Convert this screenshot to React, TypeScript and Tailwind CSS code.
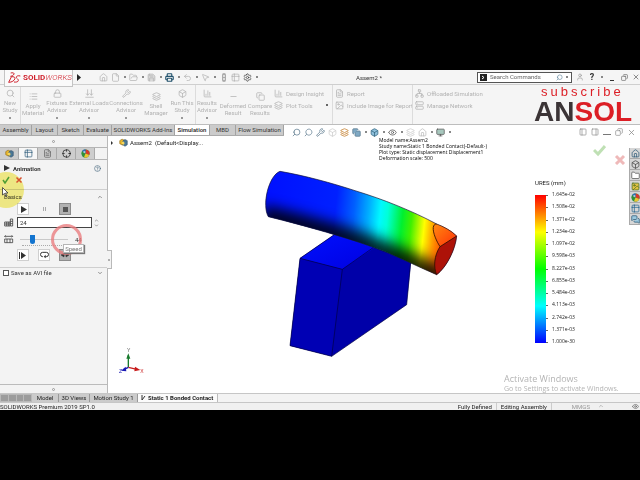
import React, { useState } from "react";
import {
  BarChart3,
  Box,
  ChevronDown,
  ChevronUp,
  CircleHelp,
  Copy,
  Crosshair,
  Eye,
  File,
  FileText,
  Folder,
  FolderOpen,
  House,
  Image,
  Layers,
  List,
  Lock,
  MessagesSquare,
  Minus,
  Monitor,
  MousePointer2,
  Network,
  PanelLeft,
  PanelRight,
  Printer,
  Save,
  Search,
  Server,
  Settings,
  Table2,
  Undo2,
  User,
  Wrench,
  X,
  type LucideIcon,
} from "lucide-react";
import clsx from "clsx";

interface RibbonItem {
  lines: string[];
  icon: LucideIcon;
  width: string;
  menu?: boolean;
  low?: boolean;
}

const adviserItems: RibbonItem[] = [
  { lines: ["New", "Study"], icon: Search, width: "w-5", menu: true },
  { lines: ["Apply", "Material"], icon: List, width: "w-6", low: true },
  { lines: ["Fixtures", "Advisor"], icon: Lock, width: "w-6", menu: true },
  { lines: ["External Loads", "Advisor"], icon: LoadsIcon as LucideIcon, width: "w-10", menu: true },
  { lines: ["Connections", "Advisor"], icon: Wrench, width: "w-[34px]", menu: true },
  { lines: ["Shell", "Manager"], icon: Layers, width: "w-[26px]", low: true },
  { lines: ["Run This", "Study"], icon: Box, width: "w-[26px]", menu: true },
];

const resultItems: RibbonItem[] = [
  { lines: ["Results", "Advisor"], icon: BarChart3, width: "w-[22px]", menu: true },
  { lines: ["Deformed", "Result"], icon: Minus, width: "w-[30px]", low: true },
  { lines: ["Compare", "Results"], icon: Copy, width: "w-6", low: true },
];

const commandTabs = [
  { label: "Assembly", width: "w-8" },
  { label: "Layout", width: "w-[26px]" },
  { label: "Sketch", width: "w-[26px]" },
  { label: "Evaluate", width: "w-7" },
  { label: "SOLIDWORKS Add-Ins", width: "w-[63px]" },
  { label: "Simulation", width: "w-[35px]" },
  { label: "MBD", width: "w-[26px]" },
  { label: "Flow Simulation", width: "w-12" },
];

const legend = [
  "1.645e-02",
  "1.508e-02",
  "1.371e-02",
  "1.234e-02",
  "1.097e-02",
  "9.598e-03",
  "8.227e-03",
  "6.855e-03",
  "5.484e-03",
  "4.113e-03",
  "2.742e-03",
  "1.371e-03",
  "1.000e-30",
];

function LoadsIcon(props: React.SVGProps<SVGSVGElement> & { size?: number }) {
  const { size = 9, ...rest } = props;
  return (
    <svg width={size} height={size} viewBox="0 0 24 24" fill="none" stroke="currentColor" strokeWidth="2" {...rest}>
      <path d="M7 1v15M3 12l4 5 4-5M17 1v15M13 12l4 5 4-5M1 22h22" />
    </svg>
  );
}

function Dot({ className }: { className?: string }) {
  return (
    <span className={clsx("flex shrink-0 justify-center", className ?? "w-[9px]")}>
      <span className="h-0.5 w-0.5 bg-[#888]" />
    </span>
  );
}

function AssemblyIcon({ size = 9 }: { size?: number }) {
  return (
    <svg width={size} height={size} viewBox="0 0 24 24" className="shrink-0">
      <path d="M2 7l6-4 7 3v9l-6 4-7-4z" fill="#e7b52c" stroke="#8a6411" strokeWidth="1.5" />
      <path d="M10 8l6-4 6 3v11l-6 4-6-4z" fill="#4c7896" stroke="#274a63" strokeWidth="1.5" />
      <path d="M7 10l5-1 3 4-2 5-5-2z" fill="#f5d65c" />
    </svg>
  );
}

function ColorWheel({ size = 9 }: { size?: number }) {
  return (
    <svg width={size} height={size} viewBox="0 0 24 24" className="shrink-0">
      <circle cx="12" cy="12" r="11" fill="#2f8f3c" />
      <path d="M12 12V1a11 11 0 0 1 10 15z" fill="#d8382c" />
      <path d="M12 12L3 5a11 11 0 0 1 9-4z" fill="#2f6fc0" />
      <path d="M12 12l10 4a11 11 0 0 1-14 6z" fill="#edc531" />
      <circle cx="9" cy="8" r="3" fill="#fff" opacity=".6" />
    </svg>
  );
}

function RibbonButton({ item }: { item: RibbonItem }) {
  const Icon = item.icon;
  return (
    <button
      className={clsx(
        "flex h-full shrink-0 flex-col items-center text-center whitespace-nowrap",
        item.width,
        item.low ? "pt-[7px]" : "pt-1"
      )}
    >
      <Icon size={9} className="shrink-0" />
      <span className="mt-px leading-[7px]">
        {item.lines[0]}
        <br />
        {item.lines[1]}
      </span>
      {item.menu && <span className="mt-1 h-0.5 w-0.5 bg-[#999]" />}
    </button>
  );
}

function RibbonRow({ icon: Icon, label, menu }: { icon: LucideIcon; label: string; menu?: boolean }) {
  return (
    <button className="flex h-3 items-center gap-[3px] whitespace-nowrap">
      <Icon size={9} className="shrink-0" />
      {label}
      {menu && <span className="mr-1 ml-auto h-0.5 w-0.5 bg-[#666]" />}
    </button>
  );
}

function TitleBar() {
  return (
    <header className="flex h-[15px] shrink-0 items-center border-b border-[#cfcfcf] bg-[#f5f5f5]">
      <div className="z-10 ml-1 flex h-[17px] w-[69px] shrink-0 items-center gap-0.5 self-start border border-t-0 border-[#c4c4c4] bg-[#fafafa] pl-[3px] text-[8px] text-[#cf1f2b]">
        <svg width="13" height="12" viewBox="0 0 39 36" fill="none" stroke="#cf1f2b" strokeWidth="3">
          <path d="M8 3c9-2 13 1 8 6-3 3-6 3-9 4M11 13L2 31c9 0 18-5 19-12 0-4-4-5-10-5" />
          <path d="M37 12c-7-2-12 0-12 4s7 5 6 10c-1 4-7 5-13 4" />
        </svg>
        <span className="leading-none">
          <b>SOLID</b>
          <i className="font-light">WORKS</i>
        </span>
      </div>
      <svg width="6" height="7" viewBox="0 0 6 7" className="mr-4 ml-1 shrink-0">
        <path d="M0 0l4 3.500-4 3.500z" fill="#222" />
      </svg>
      <nav className="flex shrink-0 items-center text-[#b4b4b4]">
        <House size={9} className="mr-[3px]" />
        <File size={9} />
        <Dot />
        <FolderOpen size={9} />
        <Dot />
        <Save size={9} fill="#d8d8d8" />
        <Dot />
        <Printer size={9} className="text-[#23536e]" strokeWidth={3} />
        <Dot />
        <Undo2 size={9} />
        <Dot />
        <MousePointer2 size={9} />
        <Dot />
        <svg width="9" height="9" viewBox="0 0 9 9" className="mr-[3px]">
          <rect x="3" y="0" width="4" height="9" rx="2" fill="#aaa" />
          <circle cx="5" cy="3" r="1" fill="#eee" />
          <circle cx="5" cy="6" r="1" fill="#eee" />
        </svg>
        <Table2 size={9} className="mr-[3px]" />
        <Settings size={9} className="text-[#444]" />
        <Dot />
      </nav>
      <h1 className="min-w-0 flex-1 truncate text-center text-[6px] text-[#333]">Assem2 *</h1>
      <label className="flex h-[11px] w-[95px] shrink-0 items-center border border-[#555] bg-white pl-0.5 text-[#5a7f9a]">
        <svg width="7" height="7" viewBox="0 0 7 7" className="mr-[3px] shrink-0">
          <path d="M0 0h7v7H0z" fill="#222" />
          <path d="M2 2l2 1.500L2 5" stroke="#fff" fill="none" />
        </svg>
        <input
          aria-label="Search Commands"
          placeholder="Search Commands"
          className="min-w-0 flex-1 text-[6px] leading-[8px] outline-none placeholder:text-[#666]"
        />
        <Search size={7} className="-scale-x-100" />
        <Dot className="w-2" />
      </label>
      <div className="flex shrink-0 items-center text-[#555]">
        <User size={8} className="ml-1 text-[#999]" />
        <button className="w-4 text-center text-[9px] leading-none font-bold text-[#333]">?</button>
        <Dot className="w-1" />
        <button aria-label="Minimize" className="flex w-4 justify-center pt-1.5">
          <span className="h-px w-1 bg-[#333]" />
        </button>
        <button aria-label="Restore" className="flex w-2 justify-center">
          <Copy size={7} className="-scale-x-100" />
        </button>
        <button aria-label="Close" className="ml-1 flex w-2 justify-center">
          <X size={8} />
        </button>
      </div>
    </header>
  );
}

function Ribbon() {
  return (
    <section className="flex h-10 shrink-0 border-b border-[#bdbdbd] bg-[#f5f5f5] text-[6px] text-[#b2b2b2]">
      <RibbonButton item={adviserItems[0]} />
      <div className="w-px shrink-0 bg-[#dcdcdc]" />
      {adviserItems.slice(1).map((item) => (
        <RibbonButton key={item.lines[0]} item={item} />
      ))}
      <div className="w-px shrink-0 bg-[#dcdcdc]" />
      {resultItems.map((item) => (
        <RibbonButton key={item.lines[0]} item={item} />
      ))}
      <div className="flex w-[60px] shrink-0 flex-col pt-0.5 pl-0.5">
        <RibbonRow icon={BarChart3} label="Design Insight" />
        <RibbonRow icon={Layers} label="Plot Tools" menu />
      </div>
      <div className="flex w-20 shrink-0 flex-col border-l border-[#dcdcdc] pt-0.5 pl-0.5">
        <RibbonRow icon={FileText} label="Report" />
        <RibbonRow icon={Image} label="Include Image for Report" />
      </div>
      <div className="flex w-[70px] shrink-0 flex-col border-l border-[#dcdcdc] pt-0.5 pl-0.5">
        <RibbonRow icon={Network} label="Offloaded Simulation" />
        <RibbonRow icon={Server} label="Manage Network" />
      </div>
      <div className="mr-2 ml-auto flex w-[98px] flex-col font-['Liberation_Sans',sans-serif] text-[#dc1e25]">
        <span className="pl-[7px] text-[13px] leading-[14px] tracking-[3px]">subscribe</span>
        <strong className="text-[28px] leading-[26px]">
          <span className="text-[#3b3436]">AN</span>SOL
        </strong>
      </div>
    </section>
  );
}

function CommandTabs() {
  return (
    <div className="z-10 flex h-[11px] shrink-0 bg-white text-[6px] text-[#333]">
      <div className="flex shrink-0 border-b border-[#aaa]">
        {commandTabs.map(({ label, width }) => (
          <button
            key={label}
            className={clsx(
              "border-r border-[#a2a2a2] text-center leading-[10px] whitespace-nowrap",
              width,
              label === "Simulation" ? "bg-white font-semibold" : "bg-[#cbcbcb]"
            )}
          >
            {label}
          </button>
        ))}
      </div>
      <div className="ml-2 flex h-3 shrink-0 items-center self-start pt-0.5 text-[#5d7b8f]">
        <div className="flex gap-[3px]">
          <Search size={9} className="-scale-x-100" />
          <Search size={9} className="-scale-x-100" strokeDasharray="4 2" />
          <Wrench size={9} />
          <Box size={9} className="text-[#ccc]" />
          <Layers size={9} className="text-[#c27a24]" />
          <Copy size={9} fill="#7fa9c4" />
        </div>
        <Dot />
        <Box size={9} fill="#8fc0dc" className="text-[#33657f]" />
        <Dot />
        <Eye size={9} className="text-[#555]" />
        <Dot />
        <Layers size={9} className="mr-[3px] text-[#ccc]" />
        <House size={9} className="text-[#bbb]" />
        <Dot />
        <Monitor size={9} fill="#a7c7bd" className="text-[#555]" />
        <Dot />
      </div>
      <div className="mr-1 ml-auto flex h-3 shrink-0 items-center gap-1 self-start pt-0.5 text-[#888]">
        <PanelLeft size={8} />
        <PanelRight size={8} />
        <span className="mt-1 h-px w-2 bg-[#777]" />
        <Copy size={8} className="-scale-x-100" />
        <X size={9} />
      </div>
    </div>
  );
}

function SquareButton({ label, active, children }: { label: string; active?: boolean; children: React.ReactNode }) {
  return (
    <button
      aria-label={label}
      className={clsx(
        "flex size-3 items-center justify-center border",
        active ? "border-[#8b8b8b] bg-[#b1b1b1]" : "border-[#cfcfcf] bg-white"
      )}
    >
      {children}
    </button>
  );
}

function FrameIcon() {
  return (
    <svg width="10" height="9" viewBox="0 0 30 27" className="shrink-0" fill="none" stroke="#444" strokeWidth="2.500">
      <path d="M2 12h16v12H2zM2 18h16M8 12v12M13 12v12M19 3h7v21h-7zM19 10h7M19 17h7" />
    </svg>
  );
}

function SpeedIcon() {
  return (
    <svg width="10" height="9" viewBox="0 0 30 27" className="shrink-0" fill="none" stroke="#444" strokeWidth="2.500">
      <path d="M2 4h24M5 1L2 4l3 3M23 1l3 3-3 3M2 12h24v11H2zM9 12v11M18 12v11" />
    </svg>
  );
}

function PropertyPanel() {
  const [frames, setFrames] = useState("24");
  const [speed, setSpeed] = useState(24);
  const [saveAvi, setSaveAvi] = useState(false);

  return (
    <aside className="relative flex w-[108px] shrink-0 flex-col border-r border-[#b9b9b9] bg-[#f3f3f3] text-[6px] text-[#333]">
      <div className="flex h-[11px] items-center justify-center">
        <span className="size-[3px] rounded-full border border-[#999]" />
      </div>
      <div className="flex h-[13px] border-y border-[#b5b5b5]">
        {[
          <AssemblyIcon key="Feature tree" />,
          <Table2 key="Properties" size={9} className="text-[#3b6581]" />,
          <FileText key="Configurations" size={9} className="text-[#666]" />,
          <Crosshair key="Dimensions" size={9} className="text-[#222]" />,
          <ColorWheel key="Display" />,
        ].map((icon, i) => (
          <button
            key={icon.key}
            aria-label={String(icon.key)}
            className={clsx(
              "flex w-[19px] items-center justify-center border-r border-[#aaa]",
              i === 1 ? "bg-[#f7f7f7]" : "bg-[#cdcdcd]"
            )}
          >
            {icon}
          </button>
        ))}
      </div>
      <div className="flex h-4 items-center pr-1.5 pl-1 font-bold">
        <svg width="6" height="6" viewBox="0 0 6 6" className="mr-[3px]">
          <path d="M0 0l6 3-6 3z" fill="#333" />
        </svg>
        Animation
        <CircleHelp size={7} className="ml-auto text-[#3d5e77]" />
      </div>
      <div className="relative flex h-[14px] items-start gap-[5px] border-b border-[#cfcfcf] pl-0.5">
        <span className="pointer-events-none absolute -top-1 left-0 h-9 w-6 overflow-hidden mix-blend-multiply">
          <span className="absolute right-0 size-9 rounded-full bg-[#f9f28a]" />
        </span>
        <button aria-label="OK" className="relative">
          <svg width="8" height="8" viewBox="0 0 8 8">
            <path d="M1 4l2 3 4-6" stroke="#4f9d34" strokeWidth="1.500" fill="none" />
          </svg>
        </button>
        <button aria-label="Cancel" className="relative">
          <svg width="8" height="8" viewBox="0 0 8 8">
            <path d="M1.500 1.500l5 5M6.500 1.500l-5 5" stroke="#d8502f" strokeWidth="1.500" fill="none" />
          </svg>
        </button>
        <svg width="7" height="10" viewBox="0 0 7 10" className="absolute bottom-0 left-0.5 translate-y-2">
          <path d="M.5.5v7.500l2-1.500 1.500 3 1-.5-1.500-3H6z" fill="#fff" stroke="#333" strokeWidth=".8" />
        </svg>
      </div>
      <div className="flex h-[13px] items-center justify-between pr-1 pl-1">
        Basics
        <ChevronUp size={6} />
      </div>
      <div className="flex gap-[9px] pl-[17px]">
        <SquareButton label="Play">
          <svg width="7" height="7" viewBox="0 0 7 7">
            <path d="M1 0l6 3.500-6 3.500z" fill="#333" />
          </svg>
        </SquareButton>
        <button aria-label="Pause" className="flex size-3 items-center justify-center gap-px">
          <span className="h-1 w-px bg-[#aaa]" />
          <span className="h-1 w-px bg-[#aaa]" />
        </button>
        <SquareButton label="Stop" active>
          <span className="size-[5px] bg-[#555]" />
        </SquareButton>
      </div>
      <div className="mt-0.5 flex items-center pr-2 pl-1">
        <FrameIcon />
        <input
          aria-label="Number of frames"
          value={frames}
          onChange={(e) => setFrames(e.target.value)}
          className="ml-[3px] h-[11px] min-w-0 flex-1 border border-[#444] bg-white pl-0.5 text-[6px]"
        />
        <span className="ml-0.5 flex flex-col">
          <ChevronUp size={5} />
          <ChevronDown size={5} />
        </span>
      </div>
      <div className="relative mt-1 flex h-[15px] items-center pl-1">
        <SpeedIcon />
        <div className="ml-1.5 flex h-[15px] w-12 flex-col justify-center">
          <input
            type="range"
            aria-label="Speed"
            value={speed}
            onChange={(e) => setSpeed(Number(e.target.value))}
            className="h-[11px] w-full appearance-none bg-[linear-gradient(#c9c9c9,#c9c9c9)] bg-[length:100%_1px] bg-center bg-no-repeat [&::-webkit-slider-thumb]:h-[9px] [&::-webkit-slider-thumb]:w-[5px] [&::-webkit-slider-thumb]:appearance-none [&::-webkit-slider-thumb]:rounded-b-full [&::-webkit-slider-thumb]:bg-[#1374cf]"
          />
          <span className="mx-0.5 border-b border-dotted border-[#aaa]" />
        </div>
        <output className="ml-[7px]">44</output>
        <span className="pointer-events-none absolute -top-2 left-[51px] size-[31px] rounded-full border-3 border-[#ea7d80] opacity-80" />
        <span
          role="tooltip"
          className="absolute top-3 left-[63px] z-10 h-[9px] w-[21px] border border-[#b5b5b5] bg-white text-center leading-[7px] text-[#777] shadow-[1px_1px_1px_#777]"
        >
          Speed
        </span>
      </div>
      <div className="mt-0.5 flex gap-[9px] border-b border-[#cfcfcf] pb-1.5 pl-[17px]">
        <SquareButton label="Play once">
          <svg width="8" height="7" viewBox="0 0 8 7">
            <path d="M0 0h1v7H0zM2 0l5 3.500L2 7z" fill="#333" />
          </svg>
        </SquareButton>
        <SquareButton label="Loop">
          <svg width="9" height="8" viewBox="0 0 27 24" fill="none" stroke="#333" strokeWidth="3">
            <path d="M9 17H8A6.500 6.500 0 0 1 8 4h11a6.500 6.500 0 0 1 0 13h-3" />
            <path d="M17 11l-6 6 6 5z" fill="#333" stroke="none" />
          </svg>
        </SquareButton>
        <SquareButton label="Reciprocate" active>
          <svg width="8" height="6" viewBox="0 0 8 6">
            <path d="M0 3l3-2v4zM8 3L5 1v4zM3 3h2" fill="#333" stroke="#333" strokeWidth=".5" />
          </svg>
        </SquareButton>
      </div>
      <div className="flex h-[9px] items-center pr-1 pl-[3px]">
        <label className="flex items-center gap-0.5">
          <input
            type="checkbox"
            checked={saveAvi}
            onChange={(e) => setSaveAvi(e.target.checked)}
            className="size-[6px] appearance-none border border-[#555] bg-white checked:bg-[#1374cf]"
          />
          Save as AVI file
        </label>
        <ChevronDown size={6} className="ml-auto" />
      </div>
      <div className="mt-auto flex h-[9px] items-center justify-center border-t border-[#bbb]">
        <span className="size-[3px] rounded-full border border-[#999]" />
      </div>
      <span className="absolute top-[114px] -right-[5px] z-10 flex h-[19px] w-[5px] items-center justify-center border border-l-0 border-[#b9b9b9] bg-[#f3f3f3]">
        <span className="size-0.5 rounded-full bg-[#999]" />
      </span>
    </aside>
  );
}

function StressModel() {
  const tube =
    "M75 37C150 50 230 72 300 95C385 121 470 155 545 195C565 202 590 216 605 231C602 270 575 325 545 347C485 322 420 287 355 265C290 240 150 200 40 173C20 140 40 50 75 37Z";
  return (
    <svg viewBox="0 0 660 630" className="absolute top-[23px] left-[147px] w-[220px]">
      <defs>
        <linearGradient id="stress" gradientUnits="userSpaceOnUse" x1="30" y1="110" x2="590" y2="170">
          <stop offset="0" stopColor="#0010ff" />
          <stop offset=".38" stopColor="#0020ff" />
          <stop offset=".48" stopColor="#0060ff" />
          <stop offset=".56" stopColor="#00b0ff" />
          <stop offset=".62" stopColor="#00f8ff" />
          <stop offset=".66" stopColor="#00ffd8" />
          <stop offset=".74" stopColor="#00f030" />
          <stop offset=".79" stopColor="#40f000" />
          <stop offset=".86" stopColor="#ffff00" />
          <stop offset=".91" stopColor="#ffa000" />
          <stop offset=".97" stopColor="#ff4000" />
        </linearGradient>
        <linearGradient id="block-top" x1="0" y1="0" x2="1" y2="1">
          <stop offset="0" stopColor="#0010ff" />
          <stop offset="1" stopColor="#0000e0" />
        </linearGradient>
        <linearGradient id="notch" x1="0" y1="0" x2="1" y2="1">
          <stop offset="0" stopColor="#ff8a10" />
          <stop offset="1" stopColor="#ff3008" />
        </linearGradient>
        <clipPath id="tube-clip">
          <path d={tube} />
        </clipPath>
        <filter id="soft" x="-20%" y="-40%" width="140%" height="180%">
          <feGaussianBlur stdDeviation="19" />
        </filter>
      </defs>
      <path d="M135 298L245 222L470 290L455 437L230 592L105 560Z" fill="#0000a8" />
      <path d="M135 298L245 222L370 258L262 331Z" fill="url(#block-top)" />
      <path d="M135 298L262 331L230 592L105 560Z" fill="#0000b4" />
      <path
        d="M245 222L135 298L105 560L230 592L455 437L468 300M135 298L262 331L360 262M262 331L230 592"
        fill="none"
        stroke="#000040"
        strokeWidth="2"
      />
      <path d={tube} fill="url(#stress)" />
      <g clipPath="url(#tube-clip)">
        <path
          d="M20 173C150 203 290 244 355 270C420 292 485 328 565 362"
          fill="none"
          stroke="#000"
          strokeWidth="72"
          opacity=".85"
          filter="url(#soft)"
        />
      </g>
      <path d="M545 195C525 195 537 235 555 263L605 231C590 214 565 202 545 195Z" fill="url(#notch)" />
      <path d="M555 263L605 231C602 270 575 325 545 347C535 325 537 290 555 263Z" fill="#ad1208" />
      <path
        d="M545 195C525 195 537 235 555 263L605 231M555 263C537 290 535 325 545 347"
        fill="none"
        stroke="#301000"
        strokeWidth="2.500"
      />
      <path d={tube} fill="none" stroke="#101030" strokeWidth="2" />
    </svg>
  );
}

function Triad() {
  return (
    <svg width="26" height="28" viewBox="0 0 78 84" className="shrink-0">
      <path d="M28 58V22" stroke="#187a2c" strokeWidth="4" />
      <path d="M22 32l6-16 6 16z" fill="#187a2c" />
      <path d="M28 58l26 6" stroke="#c81c1c" strokeWidth="4" />
      <path d="M48 56l16 10-18 4z" fill="#c81c1c" />
      <path d="M28 58l-14 7" stroke="#1a1ab4" strokeWidth="4" />
      <path d="M20 56l-14 12 16 2z" fill="#1a1ab4" />
      <g fontFamily="Liberation Sans, sans-serif" fontSize="15">
        <text x="24" y="13" fill="#555">Y</text>
        <text x="64" y="75" fill="#c81c1c">X</text>
        <text x="0" y="76" fill="#1a1ab4">Z</text>
      </g>
    </svg>
  );
}

function Viewport() {
  return (
    <main className="relative flex min-w-0 flex-1 flex-col bg-white text-[6px] text-[#222]">
      <StressModel />
      <div className="relative flex items-start pr-2.5 pl-[3px]">
        <div className="flex w-[268px] shrink-0 items-center gap-0.5 pt-0.5">
          <span className="mr-1 h-0 w-0 border-y-2 border-l-2 border-y-transparent border-l-[#333]" />
          <AssemblyIcon />
          <span>Assem2 &nbsp;(Default&lt;Display...</span>
        </div>
        <p className="pt-px font-['Open_Sans',sans-serif] text-[5px] leading-[6px] whitespace-nowrap text-black">
          Model name:Assem2
          <br />
          Study name:Static 1 Bonded Contact(-Default-)
          <br />
          Plot type: Static displacement Displacement1
          <br />
          Deformation scale: 500
        </p>
        <div className="ml-auto flex items-end gap-2 pt-1">
          <svg width="13" height="21" viewBox="0 0 13 21">
            <path d="M1 6l4 4 7-8" fill="none" stroke="#bfe0b4" strokeWidth="3" />
          </svg>
          <svg width="12" height="21" viewBox="0 0 12 21" className="mt-1 mr-1">
            <path d="M2 12l8 8M10 12l-8 8" fill="none" stroke="#efb9b9" strokeWidth="3" />
          </svg>
        </div>
      </div>
      <section className="relative mt-3.5 mr-[65px] ml-auto w-10">
        <h2 className="leading-[8px]">URES (mm)</h2>
        <div className="mt-1 flex font-['Open_Sans',sans-serif]">
          <div className="my-1 h-[148px] w-[11px] bg-[linear-gradient(#f00,#ff0_25%,#0f0_50%,#0ff_75%,#00f)]" />
          <div className="my-1 mr-1 flex h-[148px] w-0.5 flex-col justify-between">
            {legend.map((value) => (
              <span key={value} className="h-px bg-[#666]" />
            ))}
          </div>
          <ul className="flex h-[154px] flex-col justify-between">
            {legend.map((value) => (
              <li key={value} className="text-[5px] leading-[7px]">
                {value}
              </li>
            ))}
          </ul>
        </div>
      </section>
      <div className="relative mt-auto flex items-end justify-between pr-[25px] pl-[11px]">
        <div className="pb-[17px]">
          <Triad />
        </div>
        <p className="w-[111px] font-['Open_Sans',sans-serif] whitespace-nowrap text-[#b4b4b4]">
          <span className="block text-[9px] leading-[11px]">Activate Windows</span>
          <span className="block text-[7px] leading-[9px]">Go to Settings to activate Windows.</span>
        </p>
      </div>
      <div className="absolute top-3 right-0 flex w-[11px] flex-col border-l border-[#aaa] bg-[#d6d6d6]">
        {[
          <House key="Home" size={9} className="text-[#2b5876]" />,
          <Box key="Design library" size={9} className="text-[#444]" />,
          <Folder key="File explorer" size={9} fill="#fff" className="text-[#555]" />,
          <Image key="View palette" size={9} fill="#e2c044" className="text-[#49721f]" />,
          <ColorWheel key="Appearances" />,
          <Table2 key="Custom properties" size={9} className="text-[#2b6a91]" />,
          <MessagesSquare key="Forum" size={9} fill="#9cc9df" className="text-[#2b5876]" />,
        ].map((icon) => (
          <button
            key={icon.key}
            aria-label={String(icon.key)}
            className="flex h-[11px] items-center justify-center border-b border-[#aaa]"
          >
            {icon}
          </button>
        ))}
      </div>
    </main>
  );
}

function BottomBars() {
  return (
    <footer className="shrink-0 text-[6px] whitespace-nowrap text-[#222]">
      <div className="flex h-2.5 border-y border-[#c6c6c6] bg-[#f3f3f3] leading-[8px]">
        <div className="flex w-8 shrink-0 gap-px bg-[#b9b9b9] p-px">
          {["First", "Previous", "Next", "Last"].map((name) => (
            <button key={name} aria-label={name} className="flex-1 bg-[#9c9c9c]" />
          ))}
        </div>
        <button className="w-[27px] border-r border-[#999] bg-[#cbcbcb]">Model</button>
        <button className="w-[31px] border-r border-[#999] bg-[#cbcbcb]">3D Views</button>
        <button className="w-12 border-r border-[#999] bg-[#cbcbcb]">Motion Study 1</button>
        <button className="flex w-20 items-center gap-0.5 border-r border-[#bbb] bg-[#fbfbfb] pl-[3px] font-bold">
          <svg width="5" height="6" viewBox="0 0 5 6" fill="none" stroke="#333">
            <path d="M1 0v5l3-4" />
          </svg>
          Static 1 Bonded Contact
        </button>
      </div>
      <div className="flex h-[7px] bg-[#f0f0f0] leading-[7px]">
        <span className="mr-auto">SOLIDWORKS Premium 2019 SP1.0</span>
        <span className="mr-1">Fully Defined</span>
        <span className="border-x border-[#ccc] px-1">Editing Assembly</span>
        <span className="ml-5 text-[#999]">MMGS</span>
        <ChevronUp size={6} className="mr-7 ml-2 text-[#888]" />
        <Eye size={7} className="mr-px text-[#555]" />
      </div>
    </footer>
  );
}

export default function App() {
  return (
    <div className="flex min-h-screen flex-col bg-black py-[70px] font-[Roboto,'Open_Sans',sans-serif]">
      <TitleBar />
      <Ribbon />
      <CommandTabs />
      <div className="flex flex-1">
        <PropertyPanel />
        <Viewport />
      </div>
      <BottomBars />
    </div>
  );
}
